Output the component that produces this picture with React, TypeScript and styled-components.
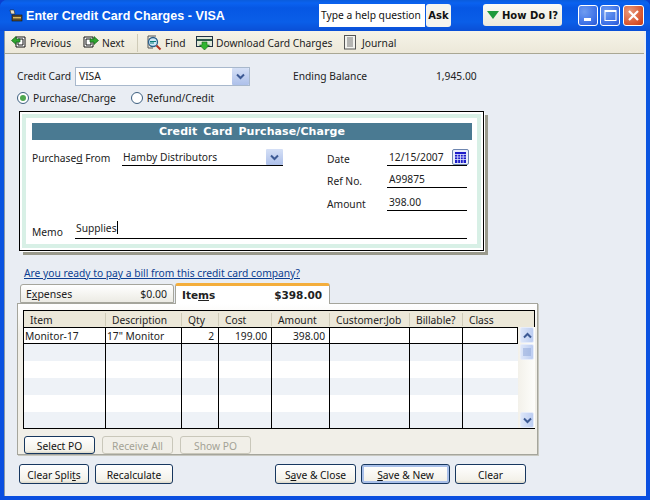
import React from "react";
import styled, { createGlobalStyle } from "styled-components";

const Global = createGlobalStyle`
  html, body { margin: 0; padding: 0; width: 650px; height: 500px; overflow: hidden; background: #0a3fd0; }
  * { box-sizing: border-box; }
  body { font-family: "Noto Sans", "Liberation Sans", sans-serif; font-size: 10.25px; color: #222; }
`;

const Win = styled.div`
  width: 650px; height: 500px; display: flex; flex-direction: column;
  background: linear-gradient(#0a57e0, #0a4fe0);
  border-radius: 7px 7px 0 0; overflow: hidden;
`;
const TitleBar = styled.div`
  height: 31px; flex: none; display: flex; align-items: center; padding: 0 6px 0 8px;
  background: linear-gradient(#0a5cdc 0, #0a62f0 3px, #0657e4 8px, #0a5ee8 22px, #0a4fd6 31px);
`;
const TitleIcon = styled.svg`width: 16px; height: 16px; flex: none; margin-right: 2px;`;
const Title = styled.div`
  font-family: "Liberation Sans", sans-serif; font-weight: 700; font-size: 12.5px; color: #fff; width: 293px; flex: none; white-space: nowrap; letter-spacing: 0.05px;
`;
const HelpInput = styled.div`
  width: 106px; height: 23px; flex: none; background: #fff; font-size: 10.25px; color: #111; display: flex; align-items: center; padding-left: 2px; white-space: nowrap; margin-top: -1px;
`;
const AskBtn = styled.div`
  width: 25px; height: 23px; flex: none; margin: -1px 32px 0 1px; background: #f4f4ee; border-radius: 3px; font-family: "DejaVu Sans", sans-serif; font-weight: 700; font-size: 10px; color: #111; display: flex; align-items: center; justify-content: center;
`;
const HowBtn = styled.div`
  width: 79px; height: 22px; flex: none; margin-right: 16px; background: linear-gradient(#fbfbf6, #ece9dc); border-radius: 3px; font-family: "DejaVu Sans", sans-serif; font-weight: 700; font-size: 10px; color: #111; display: flex; align-items: center; justify-content: center; gap: 3px; white-space: nowrap; margin-top: -1px;
`;
const WinBtn = styled.div<{ $red?: boolean }>`
  width: ${(p) => (p.$red ? 21 : 20)}px; height: 21px; margin-right: ${(p) => (p.$red ? 0 : 2)}px; margin-left: ${(p) => (p.$red ? 1 : 0)}px; border-radius: 3px; border: 1px solid #fff; flex: none; margin-top: -1px;
  background: ${(p) => p.$red ? "radial-gradient(circle at 30% 30%, #e89a7c, #d8532c 70%, #c23a15)" : "radial-gradient(circle at 30% 30%, #6f9cf0, #3b6fe6 70%, #2a55d0)"};
  display: flex; align-items: center; justify-content: center;
`;
const Body = styled.div`
  flex: 1; margin: 0 4px 4px 4px; border-left: 1px solid #8a9aa8; background: #e9edf3; display: flex; flex-direction: column; min-height: 0;
`;
const Toolbar = styled.div`
  height: 23px; flex: none; display: flex; align-items: center; padding: 1px 0 0 6px; margin-right: 2px; white-space: nowrap;
  background: linear-gradient(#f6f3e8, #ece8d9); border-bottom: 1px solid #a9a793;
`;
const ToolItem = styled.div<{ $w: number }>`
  display: flex; align-items: center; gap: 3px; width: ${(p) => p.$w}px; flex: none;
`;
const ToolSep = styled.div`width: 1px; height: 18px; background: #cfcbb8; margin: 0 7px 0 0; flex: none;`;
const Content = styled.div`flex: 1; padding: 12px 0 0 12px; display: flex; flex-direction: column; min-height: 0;`;
const TopRow = styled.div`display: flex; align-items: center; height: 20px;`;
const FieldLabel = styled.div<{ $w: number }>`width: ${(p) => p.$w}px; flex: none; white-space: nowrap;`;
const Combo = styled.div`
  width: 175px; height: 19px; background: #fff; border: 1px solid #a8b8cc; display: flex; align-items: center; justify-content: space-between; padding: 0 0 0 3px; margin-right: 43px;
`;
const DropBtn = styled.div`
  width: 17px; height: 17px; background: linear-gradient(#d5e0f6, #adc0ea); display: flex; align-items: center; justify-content: center; border-radius: 1px; flex: none;
`;
const PurchDrop = styled(DropBtn)`height: 16px; margin-top: -1px;`;
const RadioRow = styled.div`display: flex; align-items: center; height: 20px; margin-top: 2px;`;
const Radio = styled.span`
  width: 12px; height: 12px; border-radius: 50%; border: 1px solid #3d5f80; background: #fff; flex: none; margin-right: 4px; display: flex; align-items: center; justify-content: center;
`;
const RadioDot = styled.span`width: 6px; height: 6px; border-radius: 50%; background: #4fa84f;`;
const RadioLabel = styled.div`margin-right: 15px; white-space: nowrap;`;
const Card = styled.div`
  margin: 3px 0 0 2px; width: 465px; height: 140px; flex: none; background: #fff; border: 1px solid #000; box-shadow: 1px 1px 0 #fff, 4px 4px 0 #9a9a8c; padding: 2px;
`;
const CardInner = styled.div`
  height: 100%; border: 4px solid #d8f0e6; background: #fff; padding: 5px 5px 0 6px; display: flex; flex-direction: column;
`;
const CardHead = styled.div`
  height: 17px; background: #4a7a92; color: #fff; font-family: "DejaVu Sans", sans-serif; font-weight: 700; font-size: 11px; letter-spacing: 0.1px; word-spacing: 2px; display: flex; align-items: center; justify-content: center; flex: none;
`;
const CardGrid = styled.div`display: flex; flex: 1; padding-top: 8px;`;
const CardLeft = styled.div`width: 295px; flex: none;`;
const PurchRow = styled.div`display: flex; align-items: flex-start;`;
const PurchLabel = styled(FieldLabel)`padding-top: 3px;`;
const PurchField = styled.div`
  width: 161px; height: 18px; border-bottom: 1px solid #000; display: flex; justify-content: space-between; align-items: flex-start; padding: 2px 0 0 1px;
`;
const CardRight = styled.div`flex: 1; display: flex; flex-direction: column;`;
const DateRow = styled.div<{ $h: number }>`display: flex; height: ${(p) => p.$h}px; align-items: flex-start; flex: none;`;
const DateLabel = styled.div`width: 60px; padding-top: 4px; flex: none;`;
const DateField = styled.div`
  width: 80px; height: 18px; border-bottom: 1px solid #000; padding: 2px 0 0 2px; position: relative;
`;
const CalBtn = styled.div`
  position: absolute; right: -2px; top: 1px; width: 17px; height: 16px; background: #e8eefb; border: 1px solid #6e86b0; border-radius: 2px; display: flex; align-items: center; justify-content: center;
`;
const MemoRow = styled.div`display: flex; margin-top: auto; margin-bottom: 5px;`;
const MemoLabel = styled.div`width: 43px; flex: none; padding-top: 5px;`;
const MemoField = styled.div`
  width: 392px; height: 19px; border-bottom: 1px solid #000; padding: 1px 0 0 1px;
`;
const Caret = styled.span`display: inline-block; width: 1px; height: 13px; background: #000; vertical-align: -2px;`;
const BillLink = styled.a`
  display: block; margin: 15px 0 0 7px; color: #0b3d91; text-decoration: underline; height: 14px; line-height: 14px; white-space: nowrap;
`;
const TabRow = styled.div`display: flex; align-items: flex-end; height: 20px; margin: 3px 0 0 3px; gap: 1px; position: relative; z-index: 1; flex: none;`;
const Tab = styled.div<{ $active?: boolean }>`
  display: flex; justify-content: space-between; align-items: center; border-radius: 3px 3px 0 0; flex: none;
  width: ${(p) => (p.$active ? 155 : 154)}px; height: ${(p) => (p.$active ? 21 : 19)}px;
  padding: 0 ${(p) => (p.$active ? 7 : 6)}px 0 ${(p) => (p.$active ? 6 : 5)}px;
  margin-bottom: ${(p) => (p.$active ? -1 : 0)}px;
  background: ${(p) => (p.$active ? "#fff" : "linear-gradient(#fff, #ecebe4)")};
  border: 1px solid #a5a59c; border-bottom: ${(p) => (p.$active ? "none" : "1px solid #a5a59c")};
  border-top: ${(p) => (p.$active ? "3px solid #f4ae3c" : "1px solid #a5a59c")};
  font-weight: ${(p) => (p.$active ? 700 : 400)};
  font-family: ${(p) => (p.$active ? '"DejaVu Sans", sans-serif' : "inherit")};
  font-size: 10.5px;
`;
const Panel = styled.div`
  width: 521px; height: 152px; flex: none; background: linear-gradient(#fff, #f1efe8 20%); border: 1px solid #a5a59c; padding: 6px 2px 0 5px; display: flex; flex-direction: column; box-shadow: 1px 1px 0 #c8c8c0;
`;
const Table = styled.div`width: 512px; height: 119px; border-left: 1px solid #000; border-top: 1px solid #000; border-bottom: 1px solid #000; display: flex; flex-direction: column; flex: none; overflow: hidden;`;
const HeadRow = styled.div`
  height: 16px; flex: none; display: grid; grid-template-columns: 82px 76px 37px 53px 58px 80px 53px 1fr; background: #ece8d9; border-right: 1px solid #000; align-items: center;
`;
const HeadCell = styled.div<{ $last?: boolean }>`
  height: 13px; line-height: 15px; padding-left: 6px; white-space: nowrap; border-right: ${(p) => (p.$last ? "none" : "1px solid #cfcbb8")};
`;
const TableBody = styled.div`flex: 1; display: flex; min-height: 0; overflow: hidden;`;
const Rows = styled.div`width: 494px; flex: none; display: flex; flex-direction: column; border-top: 1px solid #000;`;
const Row = styled.div<{ $alt?: boolean; $first?: boolean }>`
  height: ${(p) => (p.$first ? 16 : 17)}px; flex: none; display: grid; grid-template-columns: 82px 76px 37px 53px 58px 80px 53px 1fr;
  background: ${(p) => (p.$alt ? "#eef2f7" : "#fff")};
  border-bottom: ${(p) => (p.$first ? "1px solid #000" : "none")};
  border-right: ${(p) => (p.$first ? "1px solid #000" : "none")};
`;
const Cell = styled.div<{ $r?: boolean; $last?: boolean }>`
  border-right: ${(p) => (p.$last ? "none" : "1px solid #000")};
  padding: 0 ${(p) => (p.$r ? 4 : 0)}px 0 ${(p) => (p.$r ? 0 : 1)}px; text-align: ${(p) => (p.$r ? "right" : "left")};
  line-height: 17px; white-space: nowrap; overflow: hidden;
`;
const Scroll = styled.div`
  flex: 1; background: linear-gradient(90deg, #f3f1ea, #fdfdfb); display: flex; flex-direction: column; justify-content: space-between; padding: 0 1px 0 2px;
`;
const ScrollBtn = styled.div`
  height: 16px; background: linear-gradient(90deg, #dde6f8, #bccdf2); border: 1px solid #e6ecfa; border-radius: 2px; display: flex; align-items: center; justify-content: center; flex: none;
`;
const ScrollThumb = styled(ScrollBtn)`margin-top: 1px;`;
const ScrollTop = styled.div`display: flex; flex-direction: column;`;
const PoRow = styled.div`display: flex; gap: 7px; margin: 7px 0 0 1px;`;
const Btn = styled.button<{ $w: number; $h?: number; $off?: boolean; $def?: boolean }>`
  width: ${(p) => p.$w}px; height: ${(p) => p.$h ?? 20}px; font: inherit; padding: 2px 0 0; flex: none;
  color: ${(p) => (p.$off ? "#a3a295" : "#111")};
  background: ${(p) => (p.$off ? "#f1efe8" : "linear-gradient(#fff, #f3f1e9 85%, #dcd8c8)")};
  border: 1px solid ${(p) => (p.$off ? "#c9c7ba" : "#17375f")};
  border-radius: 3px;
  box-shadow: ${(p) => (p.$def ? "inset 0 0 0 2px #a9c0ea" : "none")};
`;
const Bottom = styled.div`display: flex; margin: 9px 0 0 2px;`;
const BottomGroup = styled.div<{ $gap: number; $mr?: number }>`display: flex; gap: ${(p) => p.$gap}px; margin-right: ${(p) => p.$mr ?? 0}px;`;
const U = styled.span`text-decoration: underline;`;

const Chevron = ({ up, c = "#3d5a94" }: { up?: boolean; c?: string }) => (
  <svg width="9" height="7" viewBox="0 0 9 7">
    <path d={up ? "M1 5.5 L4.5 2 L8 5.5" : "M1 1.5 L4.5 5 L8 1.5"} fill="none" stroke={c} strokeWidth="2" />
  </svg>
);

const PrevIcon = () => (
  <svg width="16" height="15" viewBox="0 0 16 15">
    <path d="M5 2h9v10H5z" fill="#fff" stroke="#111" />
    <path d="M7 4h5v6H7z" fill="#fff" stroke="#111" />
    <path d="M0.5 5.5 L5 1.5 V4 H9 V7 H5 V9.5 Z" fill="#2fa52f" stroke="#14641a" strokeWidth="0.7" />
  </svg>
);
const NextIcon = () => (
  <svg width="16" height="15" viewBox="0 0 16 15">
    <path d="M1 2h9v10H1z" fill="#fff" stroke="#111" />
    <path d="M3 4h5v6H3z" fill="#fff" stroke="#111" />
    <path d="M15.5 5.5 L11 1.5 V4 H7 V7 H11 V9.5 Z" fill="#2fa52f" stroke="#14641a" strokeWidth="0.7" />
  </svg>
);
const FindIcon = () => (
  <svg width="17" height="17" viewBox="0 0 17 17">
    <path d="M3 2h8M3 14h5M3 2v12" stroke="#555" fill="none" />
    <circle cx="8" cy="8" r="4.5" fill="#cfe8f6" stroke="#2a5f8a" strokeWidth="1.3" />
    <path d="M5 7.5h6M5 9h4" stroke="#0a7a7a" strokeWidth="1.2" />
    <path d="M11.5 11.5 L15.5 15.5" stroke="#b03020" strokeWidth="2" />
  </svg>
);
const DownloadIcon = () => (
  <svg width="17" height="16" viewBox="0 0 17 16">
    <rect x="0.5" y="1.5" width="16" height="10" fill="#dfe8d8" stroke="#234" />
    <rect x="1" y="4" width="15" height="2" fill="#2c5a4a" />
    <path d="M6 7h5v3h2.5L8.5 15 3.5 10H6z" fill="#2fb52f" stroke="#14641a" strokeWidth="0.6" />
  </svg>
);
const JournalIcon = () => (
  <svg width="15" height="15" viewBox="0 0 15 15">
    <rect x="0.5" y="0.5" width="11" height="13.5" fill="#f2f2ee" stroke="#555" />
    <path d="M3 3h6M3 5h6M3 7h6M3 9h6M3 11h6" stroke="#777" />
  </svg>
);

const rows = [0, 1, 2, 3, 4];

export default function App() {
  return (
    <Win>
      <Global />
      <TitleBar>
        <TitleIcon viewBox="0 0 16 16">
          <path d="M2 2h4l1 4H3z" fill="#e8e0c8" stroke="#222" strokeWidth="0.6" />
          <rect x="4" y="7" width="10" height="6" fill="#5a4a2a" stroke="#111" strokeWidth="0.6" />
          <rect x="5" y="9" width="8" height="1.4" fill="#d8b860" />
        </TitleIcon>
        <Title>Enter Credit Card Charges - VISA</Title>
        <HelpInput>Type a help question</HelpInput>
        <AskBtn>Ask</AskBtn>
        <HowBtn>
          <svg width="12" height="8" viewBox="0 0 12 8"><path d="M0 0h12L6 8z" fill="#1f9a3c" /></svg>
          How Do I?
        </HowBtn>
        <WinBtn>
          <svg width="13" height="13" viewBox="0 0 13 13"><rect x="2" y="9" width="7" height="3" fill="#fff" /></svg>
        </WinBtn>
        <WinBtn>
          <svg width="13" height="13" viewBox="0 0 13 13"><rect x="1" y="1.5" width="11" height="10" fill="none" stroke="#fff" /><rect x="1" y="1" width="11" height="2" fill="#fff" /></svg>
        </WinBtn>
        <WinBtn $red>
          <svg width="13" height="13" viewBox="0 0 13 13"><path d="M2 2l9 9M11 2l-9 9" stroke="#fff" strokeWidth="2.2" /></svg>
        </WinBtn>
      </TitleBar>
      <Body>
        <Toolbar>
          <ToolItem $w={72}><PrevIcon />Previous</ToolItem>
          <ToolItem $w={54}><NextIcon />Next</ToolItem>
          <ToolSep />
          <ToolItem $w={51}><FindIcon />Find</ToolItem>
          <ToolItem $w={148}><DownloadIcon />Download Card Charges</ToolItem>
          <ToolItem $w={60}><JournalIcon />Journal</ToolItem>
        </Toolbar>
        <Content>
          <TopRow>
            <FieldLabel $w={58}>Credit Card</FieldLabel>
            <Combo>VISA<DropBtn><Chevron /></DropBtn></Combo>
            <FieldLabel $w={143}>Ending Balance</FieldLabel>
            <div>1,945.00</div>
          </TopRow>
          <RadioRow>
            <Radio><RadioDot /></Radio>
            <RadioLabel>Purchase/Charge</RadioLabel>
            <Radio />
            <RadioLabel>Refund/Credit</RadioLabel>
          </RadioRow>
          <Card>
            <CardInner>
              <CardHead>Credit Card Purchase/Charge</CardHead>
              <CardGrid>
                <CardLeft>
                  <PurchRow>
                    <PurchLabel $w={90}>Purchase<U>d</U> From</PurchLabel>
                    <PurchField>Hamby Distributors<PurchDrop><Chevron /></PurchDrop></PurchField>
                  </PurchRow>
                </CardLeft>
                <CardRight>
                  <DateRow $h={22}><DateLabel>Date</DateLabel><DateField>12/15/2007
                    <CalBtn><svg width="11" height="11" viewBox="0 0 11 11"><rect width="11" height="11" fill="#1c1cc8" /><path d="M0 2.5h11M0 5h11M0 7.5h11M2.7 2v9M5.5 2v9M8.2 2v9" stroke="#dfe6ff" strokeWidth="0.8" /></svg></CalBtn>
                  </DateField></DateRow>
                  <DateRow $h={23}><DateLabel>Ref No.</DateLabel><DateField>A99875</DateField></DateRow>
                  <DateRow $h={22}><DateLabel>Amount</DateLabel><DateField>398.00</DateField></DateRow>
                </CardRight>
              </CardGrid>
              <MemoRow>
                <MemoLabel>Memo</MemoLabel>
                <MemoField>Supplies<Caret /></MemoField>
              </MemoRow>
            </CardInner>
          </Card>
          <BillLink>Are you ready to pay a bill from this credit card company?</BillLink>
          <TabRow>
            <Tab><span>E<U>x</U>penses</span><span>$0.00</span></Tab>
            <Tab $active><span>Ite<U>m</U>s</span><span>$398.00</span></Tab>
          </TabRow>
          <Panel>
            <Table>
              <HeadRow>
                <HeadCell>Item</HeadCell>
                <HeadCell>Description</HeadCell>
                <HeadCell>Qty</HeadCell>
                <HeadCell>Cost</HeadCell>
                <HeadCell>Amount</HeadCell>
                <HeadCell>Customer:Job</HeadCell>
                <HeadCell>Billable?</HeadCell>
                <HeadCell $last>Class</HeadCell>
              </HeadRow>
              <TableBody>
                <Rows>
                  <Row $first>
                    <Cell>Monitor-17</Cell>
                    <Cell>17" Monitor</Cell>
                    <Cell $r>2</Cell>
                    <Cell $r>199.00</Cell>
                    <Cell $r>398.00</Cell>
                    <Cell /><Cell /><Cell $last />
                  </Row>
                  {rows.map((r) => (
                    <Row key={r} $alt={r % 2 === 0}>
                      <Cell /><Cell /><Cell /><Cell /><Cell /><Cell /><Cell /><Cell $last />
                    </Row>
                  ))}
                </Rows>
                <Scroll>
                  <ScrollTop>
                    <ScrollBtn><Chevron up /></ScrollBtn>
                    <ScrollThumb>
                      <svg width="8" height="8" viewBox="0 0 8 8"><path d="M0 1h8M0 3h8M0 5h8M0 7h8" stroke="#8ea6d8" /></svg>
                    </ScrollThumb>
                  </ScrollTop>
                  <ScrollBtn><Chevron /></ScrollBtn>
                </Scroll>
              </TableBody>
            </Table>
            <PoRow>
              <Btn $w={71} $h={18}>Select PO</Btn>
              <Btn $w={71} $h={18} $off>Receive All</Btn>
              <Btn $w={71} $h={18} $off>Show PO</Btn>
            </PoRow>
          </Panel>
          <Bottom>
            <BottomGroup $gap={6} $mr={102}>
              <Btn $w={70}>Clear Spli<U>t</U>s</Btn>
              <Btn $w={78}>Recalculate</Btn>
            </BottomGroup>
            <BottomGroup $gap={5}>
              <Btn $w={81}>S<U>a</U>ve &amp; Close</Btn>
              <Btn $w={89} $def><U>S</U>ave &amp; New</Btn>
              <Btn $w={71}>Clear</Btn>
            </BottomGroup>
          </Bottom>
        </Content>
      </Body>
    </Win>
  );
}
